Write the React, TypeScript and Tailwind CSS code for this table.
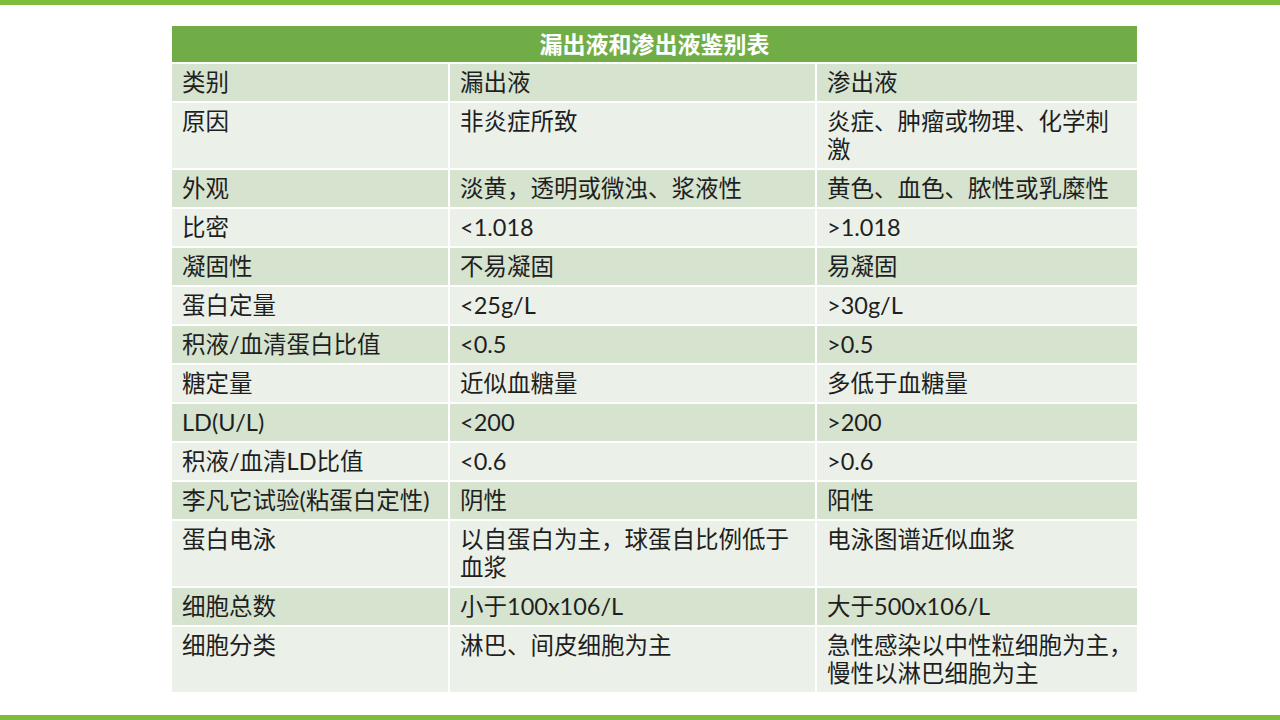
import React from 'react';

// each cell is a list of lines, broken where the slide breaks them
type Cell = string[];
type Row = [Cell, Cell, Cell];

const rows: Row[] = [
  [['类别'], ['漏出液'], ['渗出液']],
  [['原因'], ['非炎症所致'], ['炎症、肿瘤或物理、化学刺', '激']],
  [['外观'], ['淡黄，透明或微浊、浆液性'], ['黄色、血色、脓性或乳糜性']],
  [['比密'], ['<1.018'], ['>1.018']],
  [['凝固性'], ['不易凝固'], ['易凝固']],
  [['蛋白定量'], ['<25g/L'], ['>30g/L']],
  [['积液/血清蛋白比值'], ['<0.5'], ['>0.5']],
  [['糖定量'], ['近似血糖量'], ['多低于血糖量']],
  [['LD(U/L)'], ['<200'], ['>200']],
  [['积液/血清LD比值'], ['<0.6'], ['>0.6']],
  [['李凡它试验(粘蛋白定性)'], ['阴性'], ['阳性']],
  [['蛋白电泳'], ['以自蛋白为主，球蛋自比例低于', '血浆'], ['电泳图谱近似血浆']],
  [['细胞总数'], ['小于100x106/L'], ['大于500x106/L']],
  [['细胞分类'], ['淋巴、间皮细胞为主'], ['急性感染以中性粒细胞为主，', '慢性以淋巴细胞为主']],
];

const App: React.FC = () => {
  return (
    <div
      className="w-[1280px] h-[720px] bg-white flex flex-col overflow-hidden"
      style={{ fontFamily: '"Lato", "Noto Sans CJK SC", sans-serif' }}
    >
      <div className="h-[5px] bg-[#7cbd3a] shrink-0" />
      <div className="flex-1 pt-[21px] pl-[172px]">
        <div className="w-[965px] grid grid-cols-[276px_365px_320px] gap-[2px]">
          {/* Title row */}
          <div className="col-span-3 h-[36px] bg-[#70ad47] text-white font-bold text-[23px] flex items-center justify-center">
            漏出液和渗出液鉴别表
          </div>
          {rows.map((row, i) => {
            const bg = i % 2 === 0 ? 'bg-[#d5e3cf]' : 'bg-[#ebf1e9]';
            return row.map((cell, j) => (
              <div
                key={`${i}-${j}`}
                className={`${bg} pl-[10px] pt-[4px] pb-[5px] text-[23.5px] leading-[28px] text-[#1f1f1f] whitespace-nowrap overflow-hidden`}
              >
                {cell.map((line, k) => (
                  <div key={k}>{line}</div>
                ))}
              </div>
            ));
          })}
        </div>
      </div>
      <div className="h-[5px] bg-[#7cbd3a] shrink-0" />
    </div>
  );
};

export default App;
